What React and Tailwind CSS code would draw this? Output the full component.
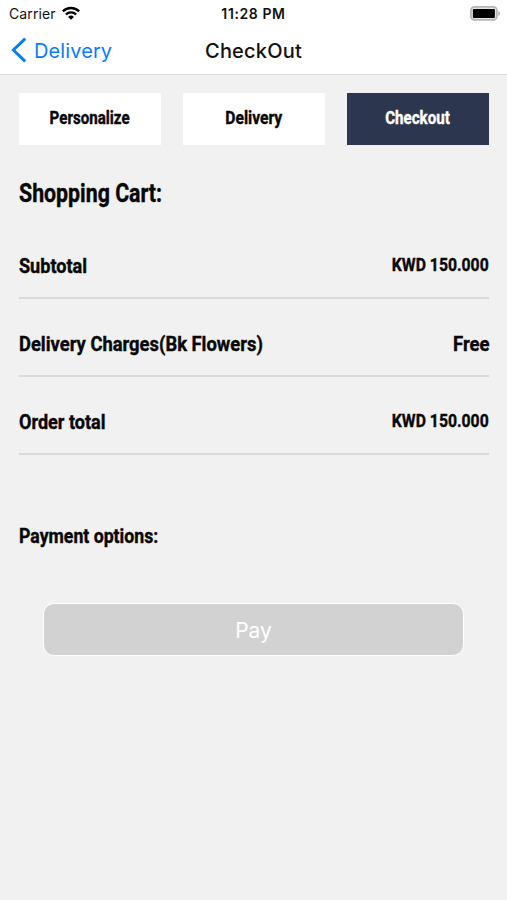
import React from 'react';

const steps = [
    { label: "Personalize", scale: "scale-x-[0.84]" },
    { label: "Delivery", scale: "scale-x-[0.87]" },
    { label: "Checkout", scale: "scale-x-[0.84]", active: true },
]

const rows = [
    { label: "Subtotal", value: "KWD 150.000", labelScale: "scale-x-[0.86]", valueStyle: "text-[19px] -mt-[3px] scale-x-[0.83]" },
    { label: "Delivery Charges(Bk Flowers)", value: "Free", labelScale: "scale-x-[0.875]", valueStyle: "text-[21px] scale-x-[0.88]" },
    { label: "Order total", value: "KWD 150.000", labelScale: "scale-x-[0.86]", valueStyle: "text-[19px] -mt-[3px] scale-x-[0.83]" },
]

function WifiIcon() {
    return (
        <svg width="18" height="14" viewBox="0 0 18 14" fill="none" stroke="#000" strokeWidth="2.4">
            <path d="M0.9 5.3a11.5 11.5 0 0 1 16.2 0" />
            <path d="M3.9 8.5a7.2 7.2 0 0 1 10.2 0" />
            <path d="M6.1 10.9a4.1 4.1 0 0 1 5.8 0L9 13.8z" fill="#000" stroke="none" />
        </svg>
    )
}

function BatteryIcon() {
    return (
        <svg width="31" height="15" viewBox="0 0 31 15">
            <rect x="0.9" y="0.9" width="26" height="13" rx="3.6" fill="#e6e6e6" stroke="#b5b5b5" strokeWidth="1.7" />
            <rect x="2.9" y="3" width="22" height="9" rx="0.9" fill="#000" />
            <path d="M28.3 5c2.2 0.8 2.2 4 0 4.8z" fill="#aaa" />
        </svg>
    )
}

function StatusBar() {
    return (
        <div className="grid grid-cols-3 items-center h-[26px] text-[14px] text-[#111]">
            <div className="flex items-center gap-[6px] pl-[9px]">
                <span className="tracking-[0.1px]">Carrier</span>
                <WifiIcon />
            </div>
            <span className="text-center text-[14px] leading-[20px] pt-px font-semibold tracking-[0.6px] whitespace-nowrap">11:28 PM</span>
            <div className="flex justify-end pr-[6px]">
                <BatteryIcon />
            </div>
        </div>
    )
}

function NavBar() {
    return (
        <div className="grid grid-cols-3 items-center h-[48px] text-[20px]">
            <button className="flex items-center gap-[7px] pl-[11px] text-[#0a7cfb]">
                <svg width="16" height="26" viewBox="0 0 16 26" fill="none" stroke="currentColor" strokeWidth="3">
                    <path d="M14.2 1.6L2.4 13l11.8 11.4" />
                </svg>
                <span className="pt-px tracking-[0.1px]">Delivery</span>
            </button>
            <h1 className="pt-px text-center font-medium tracking-[0.2px] text-[#111]">CheckOut</h1>
        </div>
    )
}

function App() {
    return (
        <div className="h-[900px] bg-[#f1f1f1] font-['Inter',sans-serif] overflow-hidden">
            <header className="h-[75px] bg-white border-b border-[#dedede]">
                <StatusBar />
                <NavBar />
            </header>

            <main className="pl-[19px] pr-[18px] pt-[18px] font-['Roboto',sans-serif] font-bold text-[#080808]">
                <div className="grid grid-cols-3 gap-[22.5px] [-webkit-text-stroke:0.4px]">
                    {
                        steps.map((step, i) => (
                            <div key={i} className={"flex items-center justify-center h-[52px] pr-px text-[18px] " + (step.active ? "bg-[#2c374f] text-white" : "bg-white")}>
                                <span className={"-mt-[4px] " + step.scale}>{step.label}</span>
                            </div>
                        ))
                    }
                </div>

                <h2 className="mt-[32px] h-[32px] leading-[32px] text-[26px] origin-left scale-x-[0.82] [-webkit-text-stroke:0.4px]">Shopping Cart:</h2>

                <div className="mt-[12px] [-webkit-text-stroke:0.4px]">
                    {
                        rows.map((row, i) => (
                            <div key={i} className="flex items-center justify-between h-[78px] pt-[16px] border-b-2 border-[#dadada] whitespace-nowrap">
                                <span className={"text-[21px] origin-left " + row.labelScale}>{row.label}</span>
                                <span className={"origin-right " + row.valueStyle}>{row.value}</span>
                            </div>
                        ))
                    }
                </div>

                <h3 className="mt-[65px] h-[32px] leading-[32px] text-[21px] origin-left scale-x-[0.842] [-webkit-text-stroke:0.4px]">Payment options:</h3>

                <button className="block w-[421px] h-[53px] mt-[51px] ml-[24px] pt-[2px] rounded-[11px] border border-white bg-[#d2d2d2] text-white font-['Inter',sans-serif] font-normal text-[21px]">Pay</button>
            </main>
        </div>
    )
}

export default App;
